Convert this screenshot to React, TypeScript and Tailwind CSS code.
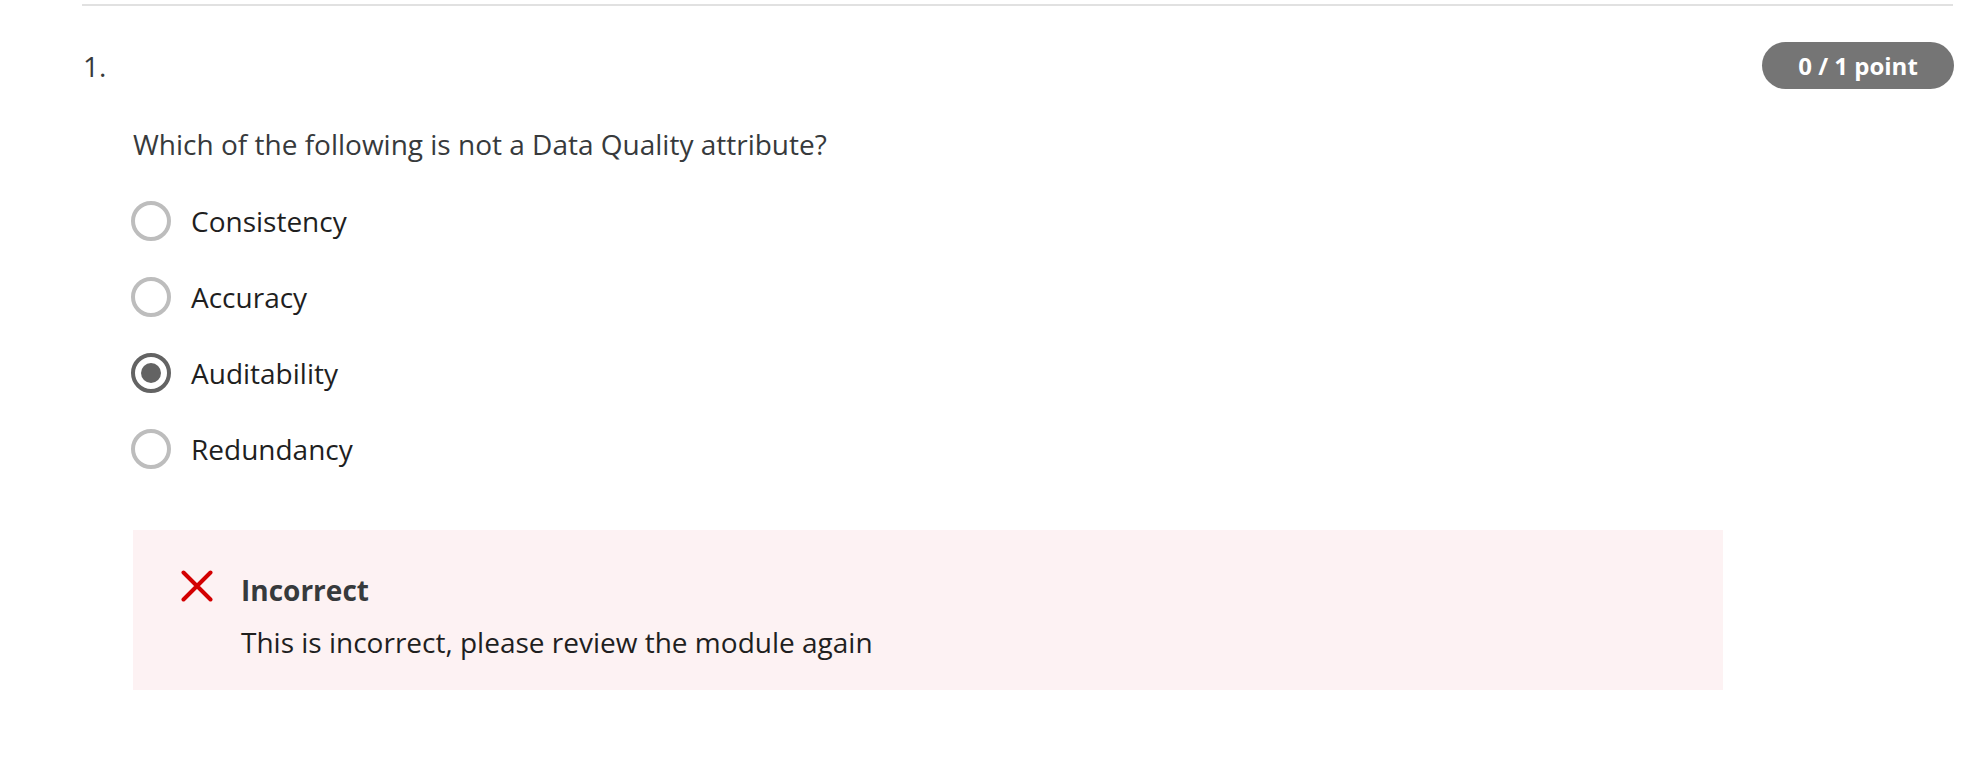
import React from "react";

const options = [
  { label: "Consistency", selected: false },
  { label: "Accuracy", selected: false },
  { label: "Auditability", selected: true },
  { label: "Redundancy", selected: false },
];

function Radio({ selected }: { selected: boolean }) {
  return (
    <div
      className={
        selected
          ? "w-[40px] h-[40px] rounded-full border-[4px] border-[#636363] flex items-center justify-center shrink-0"
          : "w-[40px] h-[40px] rounded-full border-[4px] border-[#bdbdbd] flex items-center justify-center shrink-0"
      }
    >
      {selected && <div className="w-[20px] h-[20px] rounded-full bg-[#636363]" />}
    </div>
  );
}

export default function App() {
  return (
    <div
      className="w-[1978px] h-[758px] bg-white text-[#333333]"
      style={{ fontFamily: '"Open Sans", "Noto Sans", sans-serif' }}
    >
      <div className="ml-[82px] w-[1871px]">
        <div className="mt-[4px] h-[2px] bg-[#e1e1e1]" />
        <div className="pt-[36px] flex items-center justify-between">
          <div className="text-[28px] leading-[40px] pl-[1px] text-[#373a3c]">1.</div>
          <div className="h-[47px] w-[192px] rounded-full bg-[#757575] text-white font-bold text-[24px] flex items-center justify-center mr-[-1px]">
            0 / 1 point
          </div>
        </div>
        <div className="pl-[51px]">
          <div className="mt-[35px] text-[28px] leading-[40px] text-[#373a3c]">
            Which of the following is not a Data Quality attribute?
          </div>
          <div className="mt-[37px] flex flex-col gap-[36px]">
            {options.map((o) => (
              <div key={o.label} className="flex items-center gap-[20px] ml-[-2px]">
                <Radio selected={o.selected} />
                <span className="text-[28px] leading-[40px] text-[#1f1f1f]">{o.label}</span>
              </div>
            ))}
          </div>
          <div className="mt-[61px] w-[1590px] bg-[#fdf2f3] pt-[40px] pb-[28px] pl-[48px] flex gap-[28px]">
            <svg width="32" height="32" viewBox="0 0 32 32" className="shrink-0">
              <path d="M2.5 2.5 L29.5 29.5 M29.5 2.5 L2.5 29.5" stroke="#d30001" strokeWidth="4" strokeLinecap="round" fill="none" />
            </svg>
            <div>
              <div className="text-[28px] leading-[40px] font-bold text-[#373a3c]">Incorrect</div>
              <div className="mt-[12px] text-[28px] leading-[40px] text-[#1f1f1f]">
                This is incorrect, please review the module again
              </div>
            </div>
          </div>
        </div>
      </div>
    </div>
  );
}
